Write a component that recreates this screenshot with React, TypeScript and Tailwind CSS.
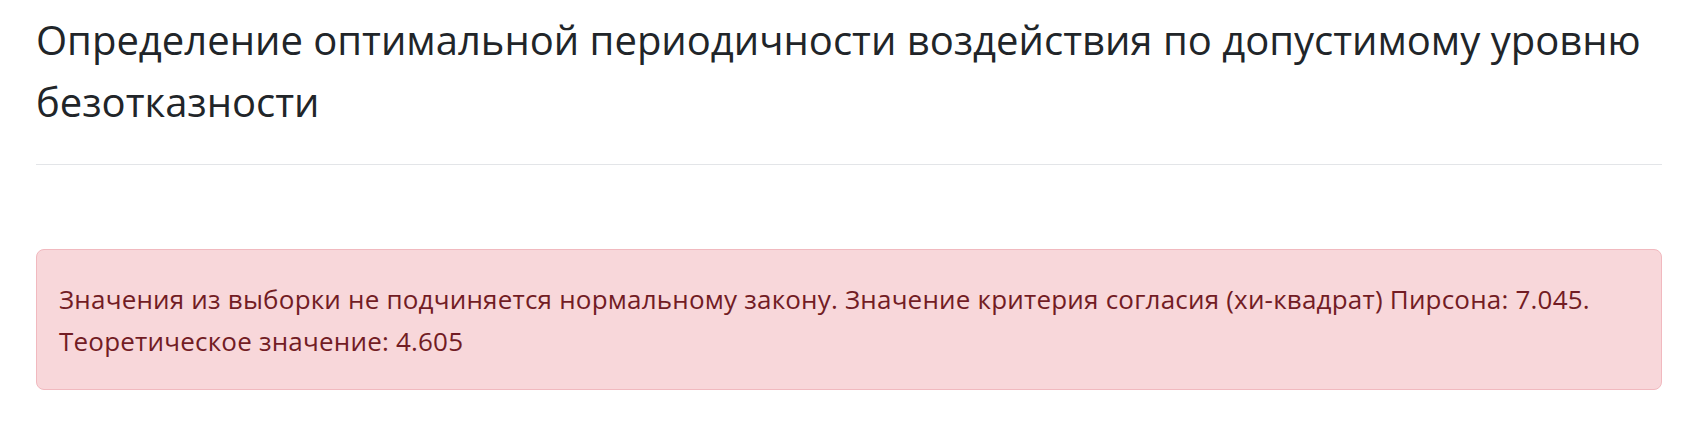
export default function App() {
  return (
    <div
      className="min-h-screen bg-white pl-[36px] pr-[37px] pt-[9px]"
      style={{ fontFamily: '"Open Sans", "Noto Sans", sans-serif' }}
    >
      <h1 className="m-0 text-[40px] font-normal leading-[62px] text-[#212529]">
        Определение оптимальной периодичности воздействия по допустимому уровню безотказности
      </h1>
      <hr className="mt-[31px] border-0 border-t border-[#e3e5e8]" />
      <div className="mt-[84px] rounded-lg border border-[#f1b9bf] bg-[#f8d7da] pl-[22px] pr-6 pt-[29px] pb-[27px] text-[26px] leading-[41.6px] tracking-[0.2px] text-[#721c24]">
        Значения из выборки не подчиняется нормальному закону. Значение критерия согласия (хи-квадрат) Пирсона: 7.045.
        <br />
        Теоретическое значение: 4.605
      </div>
    </div>
  );
}
